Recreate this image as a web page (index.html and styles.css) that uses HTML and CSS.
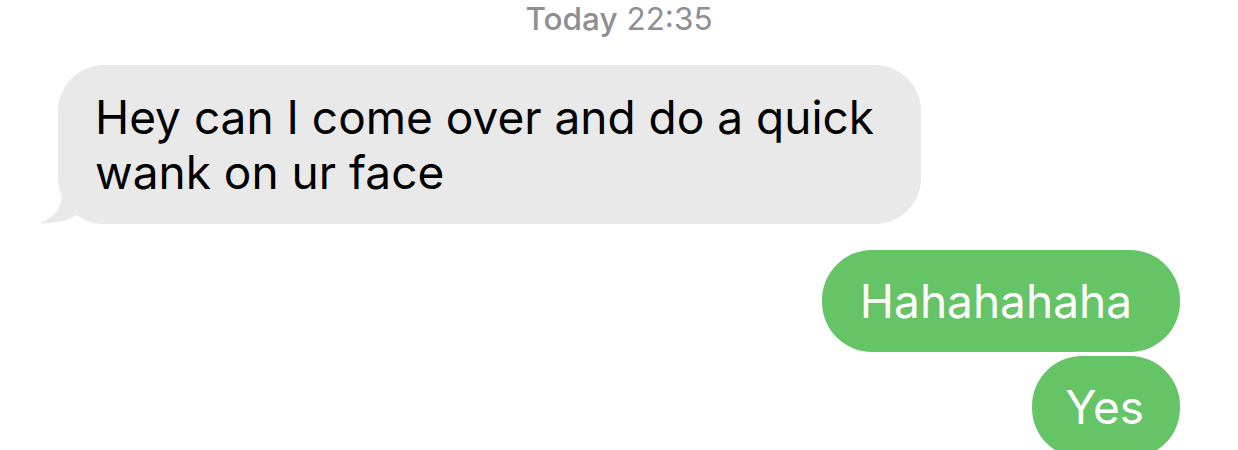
FILE: index.html
```html
<!DOCTYPE html>
<html lang="en">
<head>
    <meta charset="UTF-8">
    <meta name="viewport" content="width=device-width, initial-scale=1.0">
    <title>Messages</title>
    <link rel="stylesheet" href="styles.css">
</head>
<body>
    <div class="thread">
        <!-- Timestamp -->
        <div class="timestamp"><span class="day">Today</span> 22:35</div>

        <!-- Incoming -->
        <div class="row incoming">
            <div class="bubble received">
                Hey can I come over and do a quick wank on ur face
                <svg class="tail" width="40" height="30" viewBox="0 0 40 30">
                    <path d="M22 0 C22 14 14 24 0 29 C14 30 28 27 38 20 L40 0 Z" fill="#e9e9e9"/>
                </svg>
            </div>
        </div>

        <!-- Outgoing -->
        <div class="row outgoing">
            <div class="bubble sent">Hahahahaha</div>
            <div class="bubble sent short">Yes</div>
        </div>
    </div>
</body>
</html>
```

FILE: styles.css
```css
* {
    margin: 0;
    padding: 0;
    box-sizing: border-box;
}

:root {
    --gray-bubble: #e9e9e9;
    --green-bubble: #65c466;
    --meta-color: #8e8e93;
}

body {
    background-color: #ffffff;
    font-family: Inter, 'Liberation Sans', sans-serif;
    overflow: hidden;
}

.thread {
    display: flex;
    flex-direction: column;
    padding: 0 58px;
}

.timestamp {
    text-align: center;
    color: var(--meta-color);
    font-size: 31.5px;
    line-height: 38px;
}

.timestamp .day {
    font-weight: 500;
}

.row {
    display: flex;
    flex-direction: column;
}

.incoming {
    align-items: flex-start;
    margin-top: 27px;
}

.outgoing {
    align-items: flex-end;
    margin-top: 26px;
    gap: 4px;
}

.bubble {
    position: relative;
    font-size: 46px;
    line-height: 55px;
}

.received {
    max-width: 863px;
    padding: 25px 44px 24px 37px;
    border-radius: 46px;
    background-color: var(--gray-bubble);
    color: #000;
}

.tail {
    position: absolute;
    left: -18px;
    bottom: 0;
}

.sent {
    padding: 24px 48px 23px 38px;
    border-radius: 50px;
    background-color: var(--green-bubble);
    color: #fff;
}

.sent.short {
    padding: 24px 36px 23px 33px;
}
```
